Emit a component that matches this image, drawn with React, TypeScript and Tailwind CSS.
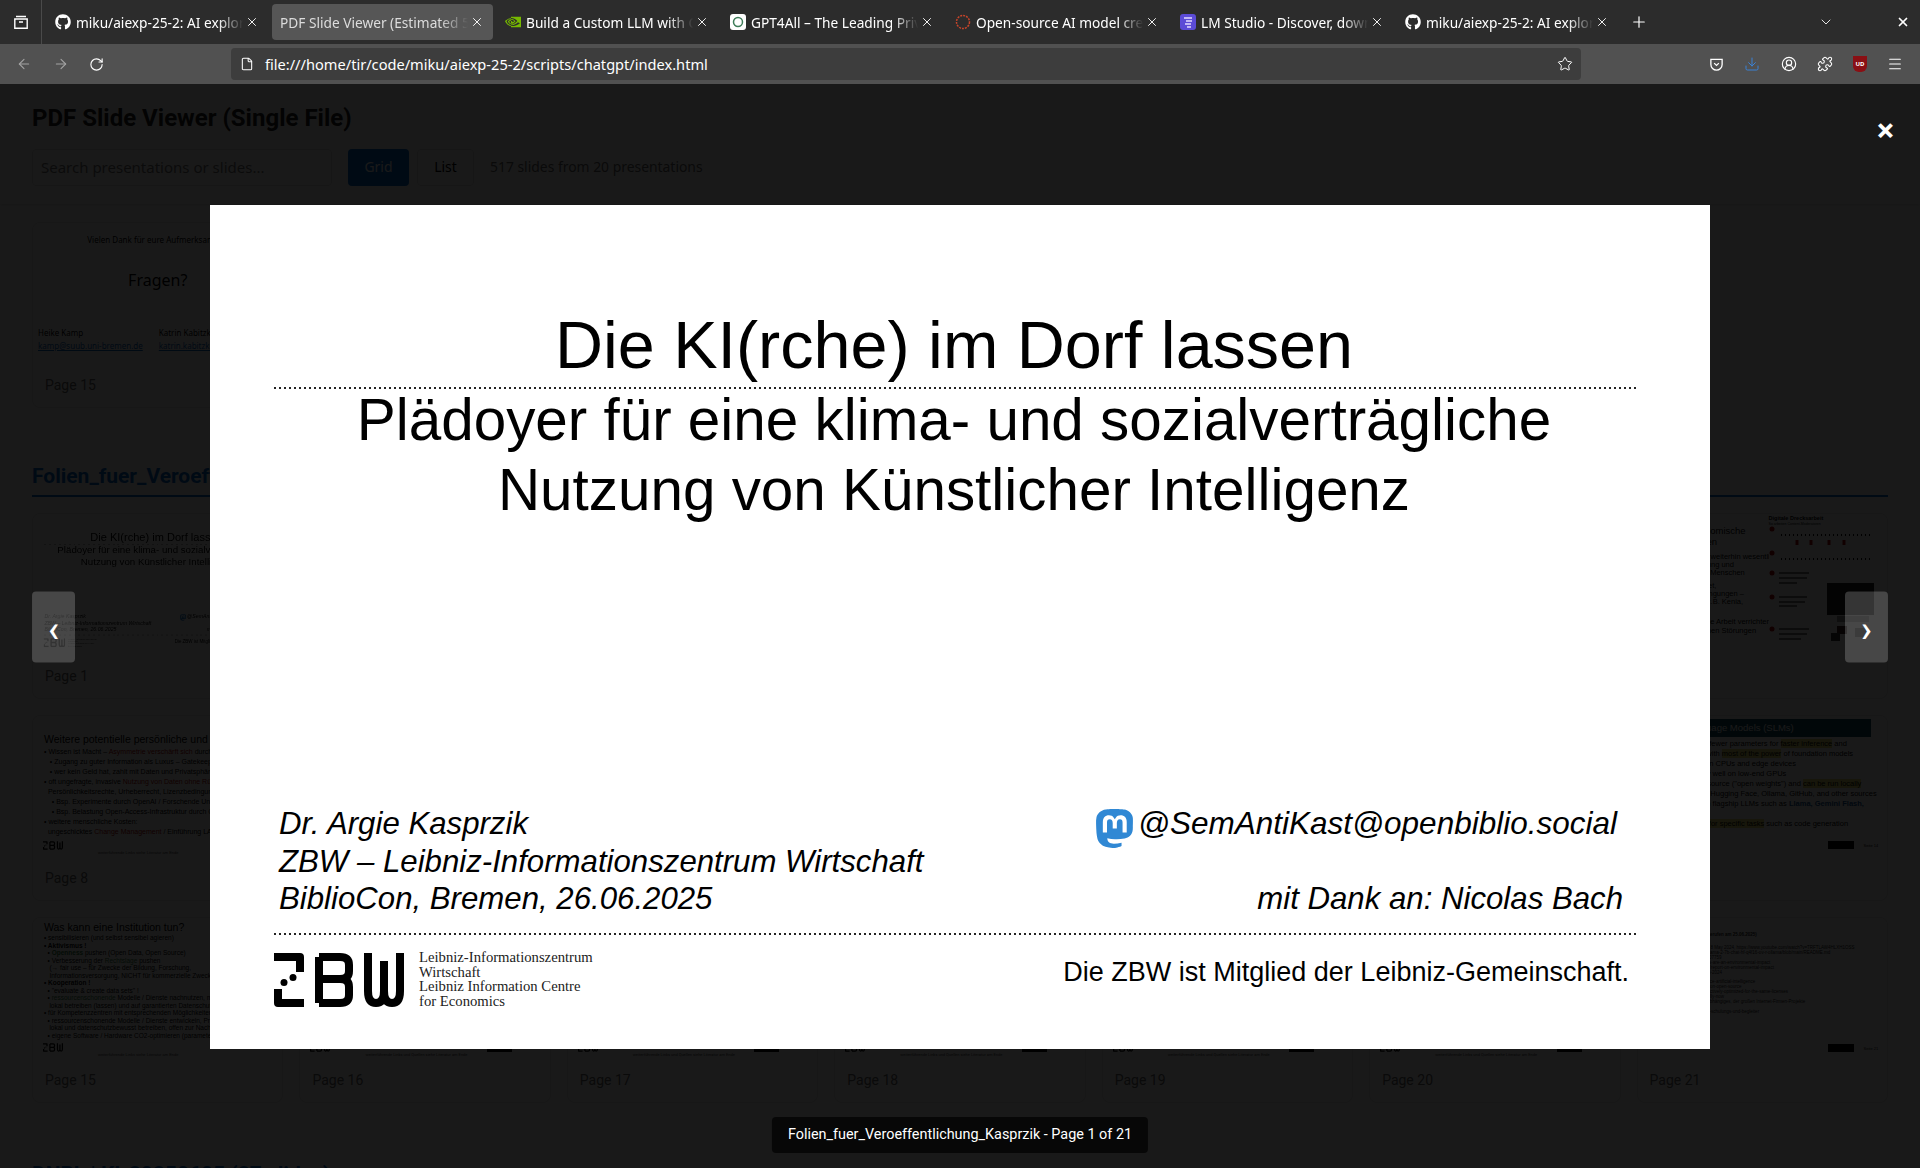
import type { ReactNode } from 'react';
import { ArrowLeft, ArrowRight, RotateCw, File, Star, Download, Puzzle, Menu, Plus, X, ChevronDown, CircleUserRound } from 'lucide-react';
import { FaGithub } from 'react-icons/fa';
import { SiNvidia, SiMastodon } from 'react-icons/si';

const GITHUB = <FaGithub className="w-4 h-4 text-white" />;

const TABS: { title: string; icon: ReactNode; active?: boolean }[] = [
  { title: 'miku/aiexp-25-2: AI exploration repository', icon: GITHUB },
  { title: 'PDF Slide Viewer (Estimated 517 slides)', icon: null, active: true },
  { title: 'Build a Custom LLM with ChatRTX', icon: <SiNvidia className="w-4 h-4 text-[#76b900]" /> },
  {
    title: 'GPT4All – The Leading Private AI',
    icon: (
      <svg viewBox="0 0 16 16" className="w-4 h-4">
        <rect width="16" height="16" rx="3" fill="#fff" />
        <circle cx="8" cy="8" r="4.500" fill="none" stroke="#3f7d5a" strokeWidth="1.500" />
      </svg>
    ),
  },
  {
    title: 'Open-source AI model creators',
    icon: (
      <svg viewBox="0 0 16 16" className="w-4 h-4">
        <circle cx="8" cy="8" r="6.500" fill="none" stroke="#c8452a" strokeWidth="1.500" strokeDasharray="2 1" />
      </svg>
    ),
  },
  {
    title: 'LM Studio - Discover, download',
    icon: (
      <svg viewBox="0 0 16 16" className="w-4 h-4">
        <rect width="16" height="16" rx="3" fill="#5b4bd6" />
        <path d="M4 4h8M6 7h6M5 10h6M7 13h4" stroke="#e4dcff" strokeWidth="1.400" />
      </svg>
    ),
  },
  { title: 'miku/aiexp-25-2: AI exploration repository', icon: GITHUB },
];

function Tab({ title, icon, active }: { title: string; icon: ReactNode; active?: boolean }) {
  return (
    <div className={`flex items-center w-[221px] h-9 rounded mr-[4px] pl-2 pr-[9px] ${active ? 'bg-[#565656]' : ''}`}>
      {icon && <span className="w-[21px] shrink-0">{icon}</span>}
      <span className={`flex-1 pt-[2px] whitespace-nowrap overflow-hidden text-[13.7px] [mask-image:linear-gradient(to_right,black_84%,transparent_99%)] ${active ? 'text-[#dcdcdc]' : 'text-white'}`}>
        {title}
      </span>
      <X className="w-[14px] h-[14px] text-white shrink-0" strokeWidth={1.6} />
    </div>
  );
}

function BrowserChrome() {
  return (
    <div className="font-['Noto_Sans',sans-serif]">
      <div className="flex items-center h-[44px] bg-[#2c2c2c] text-white">
        <div className="flex items-center justify-center w-[42px] h-full border-r border-[#4a4a4a]">
          <svg viewBox="0 0 16 16" className="w-4 h-4" fill="none" stroke="#fff" strokeWidth="1.400">
            <path d="M3 2.500h10M1.800 5h12.400v9.200H1.800zM6 8h4" />
          </svg>
        </div>
        <div className="flex items-center flex-1 pl-[5px]">
          {TABS.map((t, i) => (
            <Tab key={i} {...t} />
          ))}
          <Plus className="w-[18px] h-[18px] ml-[8px]" strokeWidth={1.6} />
        </div>
        <ChevronDown className="w-4 h-4 mr-[62px] text-[#e5e5e5]" strokeWidth={1.5} />
        <X className="w-[14px] h-[14px] mr-[10px]" strokeWidth={3} />
      </div>
      <div className="flex items-center h-[40px] bg-[#515151] pl-[16px] text-white">
        <ArrowLeft className="w-[16px] h-[16px] text-[#a3a3a3]" strokeWidth={1.6} />
        <ArrowRight className="w-[16px] h-[16px] ml-[21px] text-[#a3a3a3]" strokeWidth={1.6} />
        <RotateCw className="w-[15px] h-[15px] ml-[20px]" strokeWidth={1.8} />
        <div className="flex items-center ml-[127px] w-[1350px] h-[32px] rounded bg-[#3d3d3d] pl-[9px] pr-[8px]">
          <File className="w-[14px] h-[14px]" strokeWidth={1.8} />
          <span className="ml-[11px] pt-[1px] flex-1 text-[14.6px]">file:///home/tir/code/miku/aiexp-25-2/scripts/chatgpt/index.html</span>
          <Star className="w-[16px] h-[16px]" strokeWidth={1.5} />
        </div>
        <div className="flex items-center ml-[128px]">
          <svg viewBox="0 0 16 16" className="w-[15px] h-[15px]" fill="none" stroke="#fff" strokeWidth="1.400">
            <path d="M2 2.500h12v5.500a6 6 0 0 1-12 0zM5.500 6.500 8 9l2.500-2.500" />
          </svg>
          <Download className="w-[16px] h-[16px] ml-[20px] text-[#3b82d6]" strokeWidth={1.5} />
          <CircleUserRound className="w-[16px] h-[16px] ml-[21px]" strokeWidth={1.7} />
          <Puzzle className="w-[16px] h-[16px] ml-[20px]" strokeWidth={1.6} />
          <div className="flex items-center justify-center w-[14px] h-[16px] ml-[20px] rounded-b-[6px] bg-[#8a0f14] text-[6px] font-bold text-white">UD</div>
          <Menu className="w-[16px] h-[16px] ml-[20px]" strokeWidth={1.6} />
        </div>
      </div>
    </div>
  );
}

function ZbwLogo({ className }: { className?: string }) {
  return (
    <svg viewBox="0 0 130 54" className={className} fill="none" stroke="#000" strokeWidth="8" strokeLinejoin="round">
      <path d="M0 4h26v15" />
      <circle cx="19" cy="24.500" r="3.500" fill="#000" stroke="none" />
      <circle cx="10" cy="29.500" r="3.500" fill="#000" stroke="none" />
      <path d="M4 36v14h26" />
      <path d="M45 4h21q9 0 9 8v6q0 8-9 8H45M66 26q9 0 9 8v8q0 8-9 8H45M45 4v46" />
      <path d="M94 0v38q0 12 8 12t8-12V8M110 38q0 12 8 12t8-12V0" />
    </svg>
  );
}

function DottedRule({ className }: { className: string }) {
  return <div className={`h-[2px] -mr-[3px] bg-[repeating-linear-gradient(to_right,#222_0,#222_2px,transparent_2px,transparent_5px)] ${className}`} />;
}

function TitleSlide() {
  return (
    <div className="flex flex-col shrink-0 w-[1500px] h-[844px] bg-white pl-[64px] pr-[76px] text-black font-['Liberation_Sans',sans-serif]">
      <div className="pt-[106px] text-center text-[66.5px] leading-[68px]">Die KI(rche) im Dorf lassen</div>
      <DottedRule className="mt-[8px]" />
      <div className="-mt-[4px] text-center text-[58.4px] leading-[70px]">
        <div>Plädoyer für eine klima- und sozialverträgliche</div>
        <div>Nutzung von Künstlicher Intelligenz</div>
      </div>
      <div className="flex justify-between mt-auto pl-[5px] pr-[11px] text-[31.2px] leading-[37.5px] italic">
        <div>
          <div>Dr. Argie Kasprzik</div>
          <div>ZBW – Leibniz-Informationszentrum Wirtschaft</div>
          <div>BiblioCon, Bremen, 26.06.2025</div>
        </div>
        <div className="flex flex-col items-end">
          <div className="flex items-start pr-[6px]">
            <SiMastodon className="w-[39px] h-[43px] mt-[2px] mr-[4px] text-[#3088d4]" />
            <span className="text-[31.5px]">@SemAntiKast@openbiblio.social</span>
          </div>
          <div className="mt-auto">mit Dank an: Nicolas Bach</div>
        </div>
      </div>
      <DottedRule className="mt-[15px]" />
      <div className="flex justify-between items-start mt-[18px] mb-[40px]">
        <div className="flex items-start">
          <ZbwLogo className="w-[130px] h-[54px]" />
          <div className="ml-[15px] -mt-[3px] font-['Liberation_Serif',serif] text-[14.7px] leading-[14.800px] text-[#222]">
            <div>Leibniz-Informationszentrum</div>
            <div>Wirtschaft</div>
            <div>Leibniz Information Centre</div>
            <div>for Economics</div>
          </div>
        </div>
        <div className="pr-[5px] text-[27px] leading-[38px]">Die ZBW ist Mitglied der Leibniz-Gemeinschaft.</div>
      </div>
    </div>
  );
}

function Card({ page, children }: { page: number; children?: ReactNode }) {
  return (
    <div className="border border-[#e5e5e5] rounded-lg overflow-hidden">
      <div className="h-[140px] overflow-hidden relative bg-white">{children}</div>
      <div className="h-[44px] flex items-center px-3 text-[14px] text-[#666]">Page {page}</div>
    </div>
  );
}

function ThanksThumb() {
  return (
    <div className="h-full font-['Noto_Sans',sans-serif] text-black">
      <div className="pt-[11px] text-center text-[8px]">Vielen Dank für eure Aufmerksamkeit</div>
      <div className="pt-[24px] text-center text-[16px] leading-[20px]">Fragen?</div>
      <div className="flex gap-[16px] pl-[5px] pt-[37px] text-[8px] leading-[11px]">
        <div>
          <div>Heike Kamp</div>
          <div className="mt-[2px] underline text-[#0563c1]">kamp@suub.uni-bremen.de</div>
        </div>
        <div>
          <div>Katrin Kabitzke</div>
          <div className="mt-[2px] underline text-[#0563c1]">katrin.kabitzke@suub.de</div>
        </div>
      </div>
    </div>
  );
}

function SlideThumb() {
  return (
    <div className="origin-top-left scale-[0.166] w-[1500px]">
      <TitleSlide />
    </div>
  );
}

function Footnote({ text }: { text: string }) {
  return (
    <>
      <ZbwLogo className="absolute left-[10px] bottom-[6px] w-[20px] h-[9px]" />
      <div className="absolute left-[65px] bottom-[1px] text-[4px] leading-[5px] text-[#444] whitespace-nowrap">{text}</div>
    </>
  );
}

function RisksThumb() {
  return (
    <div className="h-full pl-[11px] pt-[17px] font-['Liberation_Sans',sans-serif] text-black whitespace-nowrap">
      <div className="text-[10.5px] leading-[13px]">Weitere potentielle persönliche und gesellschaftliche Risiken</div>
      <div className="mt-[1px] text-[7px] leading-[10px]">
        {POTENTIAL_LINES.map((l, i) => (
          <div key={i}>{l}</div>
        ))}
      </div>
      <Footnote text="weiterführende Links siehe Literatur am Ende" />
    </div>
  );
}

function InstitutionThumb() {
  return (
    <div className="h-full pl-[11px] pt-[3px] font-['Liberation_Sans',sans-serif] text-black whitespace-nowrap">
      <div className="text-[10.5px] leading-[13px]">Was kann eine Institution tun?</div>
      <div className="text-[6.5px] leading-[7.5px]">
        {INSTITUTION_LINES.map((l, i) => (
          <div key={i}>{l}</div>
        ))}
      </div>
      <Footnote text="weiterführende Links siehe Literatur am Ende" />
    </div>
  );
}

function FooterThumb() {
  return (
    <>
      <Footnote text="weiterführende Links und Quellen siehe Literatur am Ende" />
      <div className="absolute right-[38px] bottom-[6px] w-[25px] h-[7px] bg-black" />
    </>
  );
}

function CostThumb() {
  return (
    <div className="h-full flex font-['Liberation_Sans',sans-serif] text-black whitespace-nowrap">
      <div className="w-[131px] shrink-0 pl-[8px] pt-[12px] overflow-hidden text-[7.5px] leading-[8.2px]">
        <div className="pl-[42px] text-[9.5px] leading-[10.5px]">Ökonomische<br />Kosten</div>
        <div className="mt-[6px]">Zudem erfordert KI weiterhin wesentlich</div>
        <div>Arbeit bei Bereinigung und</div>
        <div>Beschriftung durch Menschen</div>
        <div className="mt-[4px]">Häufig ausgesourcet,</div>
        <div>zu schlechten Bedingungen –</div>
        <div>im globalen GSD (z.B. Kenia,</div>
        <div>ohne Arbeitsschutz</div>
        <div className="mt-[4px]">Menschen, die diese Arbeit verrichten,</div>
        <div>leiden an psychischen Störungen</div>
      </div>
      <div className="flex-1 pr-[16px]">
        <div className="text-[5.5px] font-bold leading-[7px] pt-[1px]">Digitale Drecksarbeit</div>
        <div className="text-[3.5px] leading-[4px]">So arbeiten Content-Moderatoren</div>
        <svg viewBox="0 0 105 118" className="w-[105px]">
          <circle cx="3" cy="3" r="2.500" fill="#a00" />
          <path d="M12 9h90M12 33h90" stroke="#000" strokeDasharray="1 3" strokeWidth="2" />
          <path d="M28 14l0 5M42 14l0 5M60 14l0 5M75 14l0 5" stroke="#a00" strokeWidth="3" />
          <circle cx="3" cy="27" r="2.500" fill="#a00" />
          <circle cx="3" cy="47" r="2.500" fill="#a00" />
          <circle cx="3" cy="71" r="2.500" fill="#a00" />
          <circle cx="3" cy="103" r="2.500" fill="#a00" />
          <path d="M10 47h30M10 52h28M10 57h18M10 71h28M10 76h26M10 80h18M10 103h30M10 108h28M10 113h22" stroke="#555" strokeWidth="1.500" />
          <rect x="58" y="57" width="47" height="32" fill="#222" />
          <rect x="68" y="90" width="32" height="6" fill="#999" />
          <rect x="68" y="100" width="10" height="8" fill="#422" />
          <rect x="86" y="102" width="12" height="9" fill="#666" />
          <rect x="62" y="107" width="9" height="8" fill="#333" />
        </svg>
      </div>
    </div>
  );
}

function SlmThumb() {
  return (
    <div className="h-full font-['Liberation_Sans',sans-serif] text-black pt-[3px] pr-[16px] whitespace-nowrap">
      <div className="h-[18px] bg-[#0f4a5c] text-white text-[9.5px] leading-[18px] pl-[21px]">Small Language Models (SLMs)</div>
      <div className="mt-[2px] pl-[30px] text-[7.5px] leading-[10px]">
        <div>Models with fewer parameters for <span className="bg-[#e7e06f]">faster inference</span> and</div>
        <div>smaller but with <span className="bg-[#e7e06f]">most of the power</span> of foundation models</div>
        <div>Run stably on CPUs and edge devices</div>
        <div>Perform very well on low-end GPUs</div>
        <div>Often open-source ("open weights") and <span className="bg-[#e7e06f]">can be run locally</span></div>
        <div>Available on Hugging Face, Ollama, GitHub, and other sources</div>
        <div>Derived from flagship LLMs such as <b className="text-[#0b5394]">Llama, Gemini Flash,</b></div>
        <div className="mt-[10px]"><span className="bg-[#e7e06f]">Often tuned for specific tasks</span> such as code generation</div>
      </div>
      <div className="absolute left-[190px] bottom-[7px] w-[26px] h-[8px] bg-black" />
      <div className="absolute left-[226px] bottom-[7px] text-[4px] leading-[6px]">Seite 14</div>
    </div>
  );
}

function RefsThumb() {
  return (
    <div className="h-full font-['Liberation_Sans',sans-serif] text-[#222] pt-[14px] pl-[20px] text-[4.5px] leading-[5px] whitespace-nowrap overflow-hidden">
      <div className="font-bold pl-[30px]">Links (abgerufen am 25.06.2025)</div>
      <div className="mt-[8px]">Sustainable AI, Al Source, 8 May 2024, https://www.youtube.com/watch?v=TRFTLAW4HLXH1OSS</div>
      <div>huggingface.co/ahead-ai/llama-2-7b-chat-hf-q4f16-ov-r-ollama/blob/main/README.md</div>
      <div>https://arxiv.org/abs/2305.07759</div>
      <div>the-open-source-ai-models-are-an-environmental-impact</div>
      <div>blog.huggingface.co/posts/report-on-environmental-impact</div>
      <div>ai-environmental-impact-ai-2024</div>
      <div className="mt-[4px]">sustainable-net-open-source-artificial-intelligence</div>
      <div>training-the-same-models-on-open-source</div>
      <div>significant-new-products-actively-optimized-for-the-same-licenses</div>
      <div>AI-impact-the-use-especially-now</div>
      <div>Digitale Drecksarbeit, Unabhängiges, der großen Internet-Firmen-Projekte</div>
      <div>open-data-sets-academic</div>
      <div>Zugang-nach-den-internet-schulungs-und-begleiter</div>
      <div className="absolute left-[190px] bottom-[6px] w-[26px] h-[8px] bg-black" />
      <div className="absolute left-[226px] bottom-[6px] text-[4px] leading-[6px]">Seite 21</div>
    </div>
  );
}

const POTENTIAL_LINES: ReactNode[] = [
  <>• Wissen ist Macht – <span className="text-[#a00]">Asymmetrie verschärft sich</span> durch Bezahlmodelle</>,
  <>&nbsp;&nbsp;&nbsp;• Zugang zu guter Information als Luxus – Gatekeeping durch Tech</>,
  <>&nbsp;&nbsp;&nbsp;• wer kein Geld hat, zahlt mit Daten und Privatsphäre</>,
  <>• oft ungefragte, invasive <span className="text-[#a00]">Nutzung von Daten ohne Rücksicht</span> auf</>,
  <>&nbsp;&nbsp;Persönlichkeitsrechte, Urheberrecht, Lizenzbedingungen, KI-Ausstieg</>,
  <>&nbsp;&nbsp;&nbsp;&nbsp;• Bsp. Experimente durch OpenAI / Forschende Uni Zürich in Online</>,
  <>&nbsp;&nbsp;&nbsp;&nbsp;• Bsp. Belastung Open-Access-Infrastruktur durch Crawling / Bots</>,
  <>• weitere menschliche Kosten:</>,
  <>&nbsp;&nbsp;ungeschicktes <span className="text-[#a00]">Change Management</span> / Einführung LAI mit der Brechstange</>,
];

const INSTITUTION_LINES: ReactNode[] = [
  '• sensibilisieren (und selbst sensibel agieren)',
  <b>• Aktivismus !</b>,
  <>&nbsp;&nbsp;• <b className="text-[#2a7a3a]">Openness</b> pushen (Open Data, Open Source)</>,
  <>&nbsp;&nbsp;• Verbesserung der <span className="text-[#2a7a3a]">Rechtslage</span> pushen</>,
  <>&nbsp;&nbsp;&nbsp;(→ fair use – für Zwecke der Bildung, Forschung,</>,
  <>&nbsp;&nbsp;&nbsp;Informationsversorgung, NICHT für kommerzielle Zwecke)</>,
  <b>• Kooperation !</b>,
  <>&nbsp;&nbsp;• "evaluate &amp; create data sets" !</>,
  <>&nbsp;&nbsp;• <span className="text-[#2a7a3a]">ressourcenschonende</span> Modelle / Dienste nachnutzen, möglichst</>,
  <>&nbsp;&nbsp;&nbsp;lokal betreiben (lassen) und auf garantierten Datenschutz achten</>,
  <>• für Kompetenzzentren mit entsprechenden Möglichkeiten:</>,
  <>&nbsp;&nbsp;• ressourcenschonende Modelle / Dienste entwickeln, Prozess</>,
  <>&nbsp;&nbsp;&nbsp;lokal und datenschutzbewusst betreiben, offen zur Nachnutzung</>,
  <>&nbsp;&nbsp;• eigene Software / Hardware CO2-optimieren (parametereffizient)</>,
];

const ROWS: { pages: number[]; first: ReactNode; last: ReactNode }[] = [
  { pages: [1, 2, 3, 4, 5, 6, 7], first: <SlideThumb />, last: <CostThumb /> },
  { pages: [8, 9, 10, 11, 12, 13, 14], first: <RisksThumb />, last: <SlmThumb /> },
  { pages: [15, 16, 17, 18, 19, 20, 21], first: <InstitutionThumb />, last: <RefsThumb /> },
];

function ViewerPage() {
  return (
    <div className="h-full bg-white font-['Roboto',sans-serif]">
      <div className="h-[120px] px-8 shadow-sm">
        <h1 className="pt-[19px] text-[24px] leading-[30px] font-bold text-[#222] whitespace-nowrap">PDF Slide Viewer (Single File)</h1>
        <div className="flex items-center mt-[16px] text-[13.9px] font-['Noto_Sans',sans-serif]">
          <div className="flex items-center w-[300px] h-[37px] border border-[#ddd] rounded px-2 text-[15px] text-[#757575]">Search presentations or slides...</div>
          <div className="flex items-center justify-center w-[61px] h-[37px] ml-4 rounded bg-[#0066cc] text-white">Grid</div>
          <div className="flex items-center justify-center w-[57px] h-[37px] ml-2 rounded border border-[#ddd] text-black">List</div>
          <div className="ml-4 text-[#666]">517 slides from 20 presentations</div>
        </div>
      </div>
      <div className="px-8 pt-[18px]">
        <div className="grid grid-cols-7 gap-4">
          <Card page={15}>
            <ThanksThumb />
          </Card>
        </div>
        <h2 className="mt-[54px] pb-[5px] border-b-2 border-[#0066cc] text-[21px] leading-[28px] font-bold text-[#0066cc]">
          Folien_fuer_Veroeffentlichung_Kasprzik (21 slides)
        </h2>
        {ROWS.map((row) => (
          <div key={row.pages[0]} className="grid grid-cols-7 gap-4 mt-4">
            {row.pages.map((p, i) => (
              <Card key={p} page={p}>
                {i === 0 ? row.first : i === 6 ? row.last : row.pages[0] === 15 ? <FooterThumb /> : null}
              </Card>
            ))}
          </div>
        ))}
        <h2 className="mt-[57px] text-[21px] leading-[28px] font-bold text-[#0066cc] whitespace-nowrap">DNBL | KI-20250605 (27 slides)</h2>
      </div>
    </div>
  );
}

function Lightbox() {
  return (
    <div className="absolute inset-0 flex items-center justify-center pt-[2px] bg-black/90 font-['Roboto',sans-serif] text-white">
      <TitleSlide />
      <div className="absolute right-[26px] top-[26px] text-[32px] leading-[40px] font-bold">×</div>
      <div className="absolute left-[32px] top-[543px] -translate-y-1/2 flex items-center justify-center w-[43px] h-[71px] pt-[5px] rounded bg-white/20 text-[36px] font-medium">‹</div>
      <div className="absolute right-[32px] top-[543px] -translate-y-1/2 flex items-center justify-center w-[43px] h-[71px] pt-[5px] rounded bg-white/20 text-[36px] font-medium">›</div>
      <div className="absolute bottom-[15px] left-1/2 -translate-x-1/2 px-4 py-2 rounded bg-black/70 text-[14.4px] leading-[20px] whitespace-nowrap">
        Folien_fuer_Veroeffentlichung_Kasprzik - Page 1 of 21
      </div>
    </div>
  );
}

export default function App() {
  return (
    <div className="flex flex-col w-[1920px] h-[1168px] overflow-hidden">
      <BrowserChrome />
      <div className="relative flex-1 overflow-hidden">
        <ViewerPage />
        <Lightbox />
      </div>
    </div>
  );
}
